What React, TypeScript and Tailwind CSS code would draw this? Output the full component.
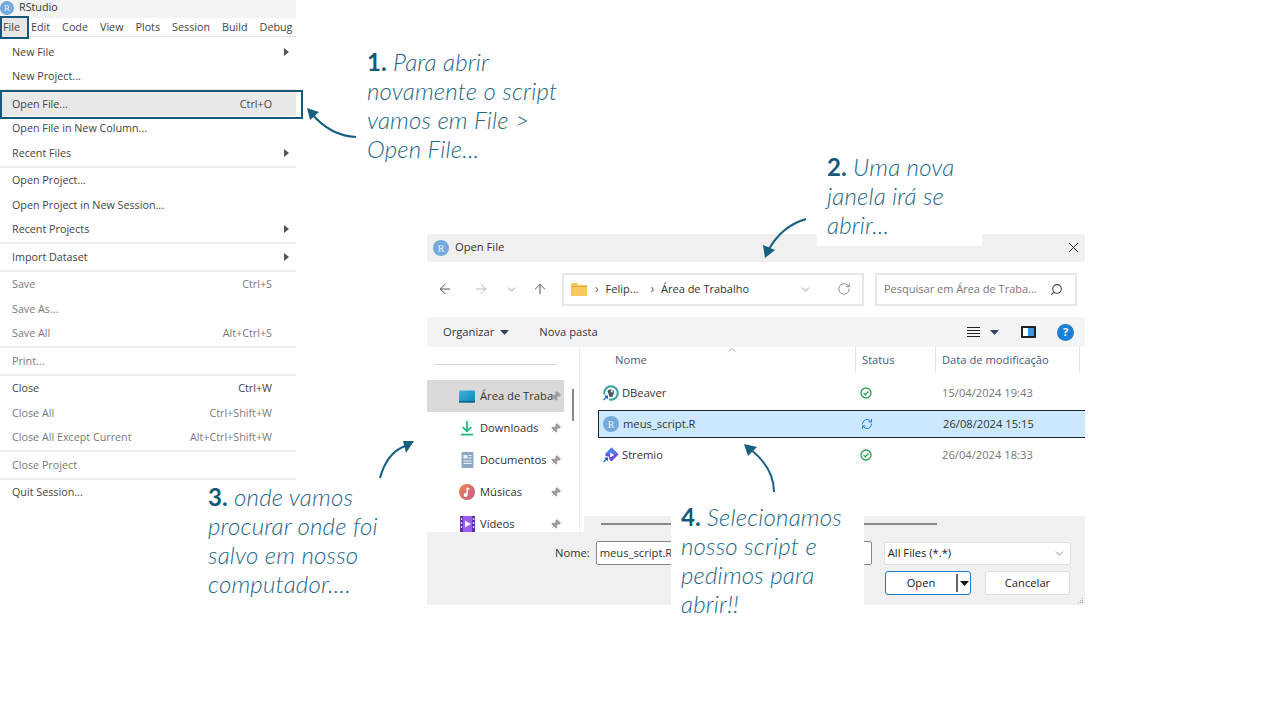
import { ArrowLeft, ArrowRight, ArrowUp, ChevronDown, ChevronUp, RotateCw, Search, X, Pin, RefreshCw } from 'lucide-react';

type MenuRow = { label?: string; shortcut?: string; sub?: boolean; off?: boolean; active?: boolean; sep?: boolean };

const menuRows: MenuRow[] = [
  { label: 'New File', sub: true },
  { label: 'New Project...' },
  { sep: true },
  { label: 'Open File...', shortcut: 'Ctrl+O', active: true },
  { label: 'Open File in New Column...' },
  { label: 'Recent Files', sub: true },
  { sep: true },
  { label: 'Open Project...' },
  { label: 'Open Project in New Session...' },
  { label: 'Recent Projects', sub: true },
  { sep: true },
  { label: 'Import Dataset', sub: true },
  { sep: true },
  { label: 'Save', shortcut: 'Ctrl+S', off: true },
  { label: 'Save As...', off: true },
  { label: 'Save All', shortcut: 'Alt+Ctrl+S', off: true },
  { sep: true },
  { label: 'Print...', off: true },
  { sep: true },
  { label: 'Close', shortcut: 'Ctrl+W' },
  { label: 'Close All', shortcut: 'Ctrl+Shift+W', off: true },
  { label: 'Close All Except Current', shortcut: 'Alt+Ctrl+Shift+W', off: true },
  { sep: true },
  { label: 'Close Project', off: true },
  { sep: true },
  { label: 'Quit Session...' },
];

const menuBar = ['Edit', 'Code', 'View', 'Plots', 'Session', 'Build', 'Debug'];

const RLogo = ({ size = 16 }: { size?: number }) => (
  <svg width={size} height={size} viewBox="0 0 16 16" className="shrink-0">
    <circle cx="8" cy="8" r="8" fill="#75a9dc" />
    <text x="8" y="11.6" textAnchor="middle" fontSize="10" fill="#eaf2fb" fontFamily="Liberation Serif, serif">R</text>
  </svg>
);

const CheckIcon = () => (
  <svg width="12" height="12" viewBox="0 0 12 12" fill="none" stroke="#2e9e4f" strokeWidth="1.3" className="shrink-0">
    <circle cx="6" cy="6" r="5" />
    <path d="M3.6 6.2 5.3 7.8 8.4 4.5" />
  </svg>
);

const DesktopIcon = () => (
  <svg width="16" height="13" viewBox="0 0 16 13">
    <defs>
      <linearGradient id="desk" x1="0" y1="0" x2="1" y2="1">
        <stop offset="0" stopColor="#35b6dc" />
        <stop offset="1" stopColor="#1482b8" />
      </linearGradient>
    </defs>
    <rect x="0" y="0.5" width="16" height="12" rx="1" fill="url(#desk)" />
    <rect x="0" y="11" width="16" height="1.5" fill="#10607f" />
  </svg>
);

const DownloadIcon = () => (
  <svg width="16" height="16" viewBox="0 0 16 16" fill="none" stroke="#1fb184" strokeWidth="1.7">
    <path d="M8 1v10M3.6 7 8 11.2 12.4 7" />
    <path d="M2 14.6h12" />
  </svg>
);

const DocIcon = () => (
  <svg width="13" height="16" viewBox="0 0 13 16">
    <rect x="0.5" y="0" width="12" height="16" rx="1" fill="#8ca7c6" />
    <path d="M2.5 3h4v3.5h-4z" fill="#eef2f6" />
    <path d="M7.5 3.5h3M7.5 6h3M2.5 9h8M2.5 11.5h8" stroke="#eef2f6" strokeWidth="1" fill="none" />
  </svg>
);

const MusicIcon = () => (
  <svg width="16" height="16" viewBox="0 0 16 16">
    <defs>
      <linearGradient id="mus" x1="0" y1="0" x2="1" y2="1">
        <stop offset="0" stopColor="#ec8a4c" />
        <stop offset="1" stopColor="#c9568f" />
      </linearGradient>
    </defs>
    <circle cx="8" cy="8" r="8" fill="url(#mus)" />
    <path d="M7.4 11V3.6l3 .4v1.8L8.8 5.6V11z" fill="#fff" />
    <circle cx="6.6" cy="11" r="1.9" fill="#fff" />
  </svg>
);

const VideoIcon = () => (
  <svg width="15" height="16" viewBox="0 0 15 16">
    <rect width="15" height="16" rx="1" fill="#9a5ff0" />
    <rect width="3" height="16" fill="#5a2fa8" />
    <rect x="12" width="3" height="16" fill="#5a2fa8" />
    <path d="M5 4.5 11 8l-6 3.5z" fill="#f4ecfd" />
    <path d="M.8 2h1.4v2H.8zM.8 6h1.4v2H.8zM.8 10h1.4v2H.8zM12.8 2h1.4v2h-1.4zM12.8 6h1.4v2h-1.4zM12.8 10h1.4v2h-1.4z" fill="#e3cdf7" />
  </svg>
);

const Shortcut = () => (
  <>
    <rect x="0" y="9.5" width="7" height="7" fill="#fff" />
    <path d="M1.5 15 5 11.5M2.8 11.2H5.4V13.8" stroke="#1668c4" strokeWidth="1.2" fill="none" />
  </>
);

const DBeaverIcon = () => (
  <svg width="17" height="17" viewBox="0 0 17 17" className="shrink-0">
    <circle cx="9" cy="8" r="6.8" fill="#f4fafb" stroke="#3aa0a8" strokeWidth="2" />
    <path d="M5.5 6c2-2.2 5.6-1.8 6.6.8l-1.4 5H7.4z" fill="#4a555f" />
    <circle cx="9.8" cy="6.4" r="1.1" fill="#fff" />
    <Shortcut />
  </svg>
);

const StremioIcon = () => (
  <svg width="17" height="17" viewBox="0 0 17 17" className="shrink-0">
    <path d="M9.5 .6 16.6 7.6 9.5 14.6 3 8z" fill="#6a4fe0" />
    <path d="M9.5 .6 3 7h13z" fill="#4f7de8" />
    <path d="M8.2 5.4 12.2 8l-4 2.6z" fill="#fff" />
    <Shortcut />
  </svg>
);

const sideRows = [
  { label: 'Área de Traba', icon: <DesktopIcon />, active: true },
  { label: 'Downloads', icon: <DownloadIcon /> },
  { label: 'Documentos', icon: <DocIcon /> },
  { label: 'Músicas', icon: <MusicIcon /> },
  { label: 'Vídeos', icon: <VideoIcon /> },
];

const Caret = () => (
  <svg width="9" height="5" viewBox="0 0 9 5" className="shrink-0">
    <path d="M0 0h9L4.5 5z" fill="#33415c" />
  </svg>
);

const Menu = () => (
  <div className="w-[296px] font-['Open_Sans',sans-serif] text-[10.75px] text-[#444]">
    <div className="h-[18px] bg-[#f3f3f3] flex items-center gap-[5px] pb-[3px]">
      <RLogo size={14} />
      <span className="text-[#333]">RStudio</span>
    </div>
    <div className="h-[19px] border-b border-[#e6e6e6] flex items-center relative">
      <div className="absolute left-0 top-[-2px] w-[29px] h-[23px] border-2 border-[#17587a] bg-[#e6e6e6] flex items-center pl-[1px] z-10">File</div>
      <div className="ml-[31px] flex gap-[12px]">
        {menuBar.map((name) => (
          <span key={name}>{name}</span>
        ))}
      </div>
    </div>
    <div className="pt-[2.5px]">
      {menuRows.map((row, i) =>
        row.sep ? (
          <div key={i} className="h-[3px] flex items-center">
            <div className="w-full h-[2px] bg-[#ebebef]" />
          </div>
        ) : (
          <div
            key={i}
            className={`h-[24.5px] flex items-center pl-[12px] pr-[7px] relative ${row.active ? 'bg-[#e8e8e8]' : ''} ${row.off ? 'text-[#7a7a7a]' : ''}`}
          >
            <span>{row.label}</span>
            {row.shortcut && <span className="ml-auto mr-[17px]">{row.shortcut}</span>}
            {row.sub && (
              <svg width="5" height="8" viewBox="0 0 5 8" className="ml-auto">
                <path d="M0 0l5 4-5 4z" fill="#555" />
              </svg>
            )}
            {row.active && <div className="absolute left-0 top-[-2px] w-[303px] h-[29px] border-2 border-[#17587a]" />}
          </div>
        ),
      )}
    </div>
  </div>
);

const Dialog = () => (
  <div className="absolute left-[427px] top-[234px] w-[658px] h-[371px] flex flex-col overflow-hidden font-['Open_Sans',sans-serif] text-[11.2px] text-[#333]">
    <div className="h-[28px] bg-[#f0f0f0] flex items-center pl-[6px] pr-[3px] pb-[1px] gap-[6px]">
      <RLogo />
      <span>Open File</span>
      <X size={17} strokeWidth={1.4} className="ml-auto text-[#222]" />
    </div>
    <div className="h-[55px] bg-white flex items-center pl-[10px] pb-[1px] text-[#555]">
      <ArrowLeft size={16} strokeWidth={1.5} />
      <ArrowRight size={16} strokeWidth={1.2} className="ml-[20px] text-[#aaa]" />
      <ChevronDown size={13} strokeWidth={1.4} className="ml-[16px] text-[#777]" />
      <ArrowUp size={16} strokeWidth={1.5} className="ml-[14px]" />
      <div className="ml-[14px] w-[302px] h-[33px] border-2 border-[#e7e7e7] flex items-center pl-[7px] pr-[11px] text-[#333] text-[11px]">
        <svg width="16" height="13" viewBox="0 0 16 13">
          <path d="M0 1.5A1.5 1.5 0 0 1 1.5 0H6l1.5 2H16v11H0z" fill="#f6c85f" />
          <path d="M0 3h16v1H0z" fill="#e0a93a" />
        </svg>
        <span className="ml-[8px] text-[#555] text-[12px]">›</span>
        <span className="ml-[7px]">Felip...</span>
        <span className="ml-[12px] text-[#555] text-[12px]">›</span>
        <span className="ml-[7px]">Área de Trabalho</span>
        <ChevronDown size={13} strokeWidth={1.3} className="ml-auto mr-[25px] text-[#777]" />
        <RotateCw size={14} strokeWidth={1.4} className="text-[#777]" />
      </div>
      <div className="ml-[11px] w-[202px] h-[33px] border-2 border-[#e7e7e7] flex items-center pl-[7px] pr-[12px] text-[#777] text-[11px]">
        <span>Pesquisar em Área de Traba...</span>
        <Search size={13} strokeWidth={2} className="ml-auto text-[#444] scale-x-[-1]" />
      </div>
    </div>
    <div className="h-[30px] bg-[#f3f4f6] flex items-center pl-[16px] pr-[11px] text-[#334]">
      <span>Organizar</span>
      <span className="ml-[6px]"><Caret /></span>
      <span className="ml-[30px]">Nova pasta</span>
      <svg width="13" height="12" viewBox="0 0 13 12" className="ml-auto" stroke="#222" strokeWidth="1">
        <path d="M0 1.5h13M0 4.5h13M0 7.5h13M0 10.5h13" />
      </svg>
      <span className="ml-[10px]"><Caret /></span>
      <span className="ml-[22px] w-[15px] h-[12px] border-2 border-[#222] rounded-[1px] bg-[linear-gradient(90deg,#fff_50%,#3f94e0_50%)]" />
      <span className="ml-[21px] w-[17px] h-[17px] rounded-full bg-[#1c7fd8] text-white text-[11px] font-bold flex items-center justify-center">?</span>
    </div>
    <div className="h-[185px] flex bg-white">
      <div className="w-[137px] shrink-0 pt-[17px]">
        <div className="h-[1px] bg-[#cfcfcf] mx-[8px]" />
        <div className="mt-[15px] flex flex-col">
          {sideRows.map((row) => (
            <div key={row.label} className={`h-[32px] shrink-0 flex items-center pl-[32px] ${row.active ? 'bg-[#d9d9d9]' : ''}`}>
              <span className="w-[16px] flex justify-center shrink-0">{row.icon}</span>
              <span className="ml-[5px] w-[70px] whitespace-nowrap">{row.label}</span>
              <Pin size={11} strokeWidth={1.5} fill="#999" className="text-[#999] rotate-45 shrink-0" />
            </div>
          ))}
        </div>
      </div>
      <div className="w-[16px] shrink-0 border-r border-[#eeeeee] pt-[42px] pl-[8px]">
        <div className="w-[2px] h-[32px] bg-[#888]" />
      </div>
      <div className="flex-1 flex flex-col">
        <div className="flex-1 relative">
          <ChevronUp size={12} strokeWidth={1.5} className="absolute left-[146px] top-[-3px] text-[#888]" />
          <div className="h-[26px] flex items-center text-[#4a5a78]">
            <span className="w-[276px] pl-[35px] border-r border-[#e3e3e3] h-full flex items-center">Nome</span>
            <span className="w-[80px] pl-[6px] border-r border-[#e3e3e3] h-full flex items-center">Status</span>
            <span className="w-[144px] pl-[6px] border-r border-[#e3e3e3] h-full flex items-center">Data de modificação</span>
          </div>
          <div className="ml-[18px] mt-[4.5px] flex flex-col text-[#333]">
            <div className="h-[31px] flex items-center pl-[4px]">
              <DBeaverIcon />
              <span className="ml-[3px] w-[238px]">DBeaver</span>
              <CheckIcon />
              <span className="ml-[70px] text-[#777]">15/04/2024 19:43</span>
            </div>
            <div className="h-[28px] my-[1.5px] flex items-center pl-[4px] bg-[#cce8ff] border border-r-0 border-[#222] rounded-l-[1px]">
              <RLogo />
              <span className="ml-[4px] w-[238px]">meus_script.R</span>
              <RefreshCw size={12} strokeWidth={2} className="text-[#1a7fd4] shrink-0" />
              <span className="ml-[70px]">26/08/2024 15:15</span>
            </div>
            <div className="h-[31px] flex items-center pl-[4px]">
              <StremioIcon />
              <span className="ml-[3px] w-[238px]">Stremio</span>
              <CheckIcon />
              <span className="ml-[70px] text-[#777]">26/04/2024 18:33</span>
            </div>
          </div>
        </div>
        <div className="h-[16px] bg-[#f0f0f0] ml-[4px] flex items-center pl-[17px]">
          <div className="w-[336px] h-[2px] bg-[#888]" />
        </div>
      </div>
    </div>
    <div className="h-[73px] bg-[#f0f0f0] relative flex flex-col pt-[9px] pl-[128px]">
      <div className="flex items-center h-[24px]">
        <span>Nome:</span>
        <div className="ml-[6px] w-[276px] h-[24px] bg-white border border-[#888] rounded-[2px] flex items-center pl-[3px]">meus_script.R</div>
        <div className="ml-[12px] w-[187px] h-[23px] bg-white border border-[#e0e0e0] rounded-[2px] flex items-center justify-between pl-[3px] pr-[4px] text-[#222]">
          All Files (*.*)
          <ChevronDown size={13} strokeWidth={1.3} className="text-[#666]" />
        </div>
      </div>
      <div className="flex mt-[6px] ml-[330px] gap-[14px]">
        <div className="w-[86px] h-[24px] bg-white border-[1.5px] border-[#1c7fd8] rounded-[3px] flex items-center">
          <span className="w-[70px] text-center text-[#222]">Open</span>
          <span className="w-[2px] h-[18px] bg-[#666]" />
          <svg width="9" height="5" viewBox="0 0 9 5" className="ml-[2px]">
            <path d="M0 0h9L4.5 5z" fill="#111" />
          </svg>
        </div>
        <div className="w-[85px] h-[24px] bg-white border border-[#dcdcdc] rounded-[3px] flex items-center justify-center text-[#222]">Cancelar</div>
      </div>
      <svg width="6" height="6" viewBox="0 0 6 6" className="absolute right-[1px] bottom-[1px]" fill="#aaa">
        <path d="M4 0h1v1H4zM2 2h1v1H2zM4 2h1v1H4zM0 4h1v1H0zM2 4h1v1H2zM4 4h1v1H4z" />
      </svg>
    </div>
  </div>
);

const Note = ({ className, num, lines }: { className: string; num: string; lines: string[] }) => (
  <div className={`absolute bg-white font-['Lato',sans-serif] italic font-light text-[24px] tracking-[0.2px] leading-[29px] text-[#24678a] whitespace-nowrap ${className}`}>
    {lines.map((line, i) => (
      <div key={i}>
        {i === 0 && <span className="font-bold not-italic text-[#17587a]">{num} </span>}
        {line}
      </div>
    ))}
  </div>
);

const Arrows = () => (
  <svg width="1280" height="720" viewBox="0 0 1280 720" className="absolute inset-0 pointer-events-none" fill="none" stroke="#17607f" strokeWidth="2">
    <path d="M356 137C337 136 323 127 312 114" />
    <path d="M307 108 319 112 310 120z" fill="#17607f" stroke="none" />
    <path d="M806 219C789 224 777 235 769 249" />
    <path d="M765 258 763 245 775 250z" fill="#17607f" stroke="none" />
    <path d="M380 478C384 463 392 451 405 446" />
    <path d="M414 441 403 441 406 453z" fill="#17607f" stroke="none" />
    <path d="M774 492C774 474 764 460 750 449" />
    <path d="M744 444 757 447 748 456z" fill="#17607f" stroke="none" />
  </svg>
);

export default function App() {
  return (
    <div className="relative w-[1280px] h-[720px] bg-white overflow-hidden">
      <Menu />
      <Dialog />
      <Note className="left-[367px] top-[47px]" num="1." lines={['Para abrir', 'novamente o script', 'vamos em File >', 'Open File...']} />
      <Note className="left-[817px] top-[152px] w-[165px] h-[94px] pl-[10px]" num="2." lines={['Uma nova', 'janela irá se', 'abrir...']} />
      <Note className="left-[208px] top-[482px]" num="3." lines={['onde vamos', 'procurar onde foi', 'salvo em nosso', 'computador....']} />
      <Note className="left-[671px] top-[502px] w-[193px] pl-[10px]" num="4." lines={['Selecionamos', 'nosso script e', 'pedimos para', 'abrir!!']} />
      <Arrows />
    </div>
  );
}
